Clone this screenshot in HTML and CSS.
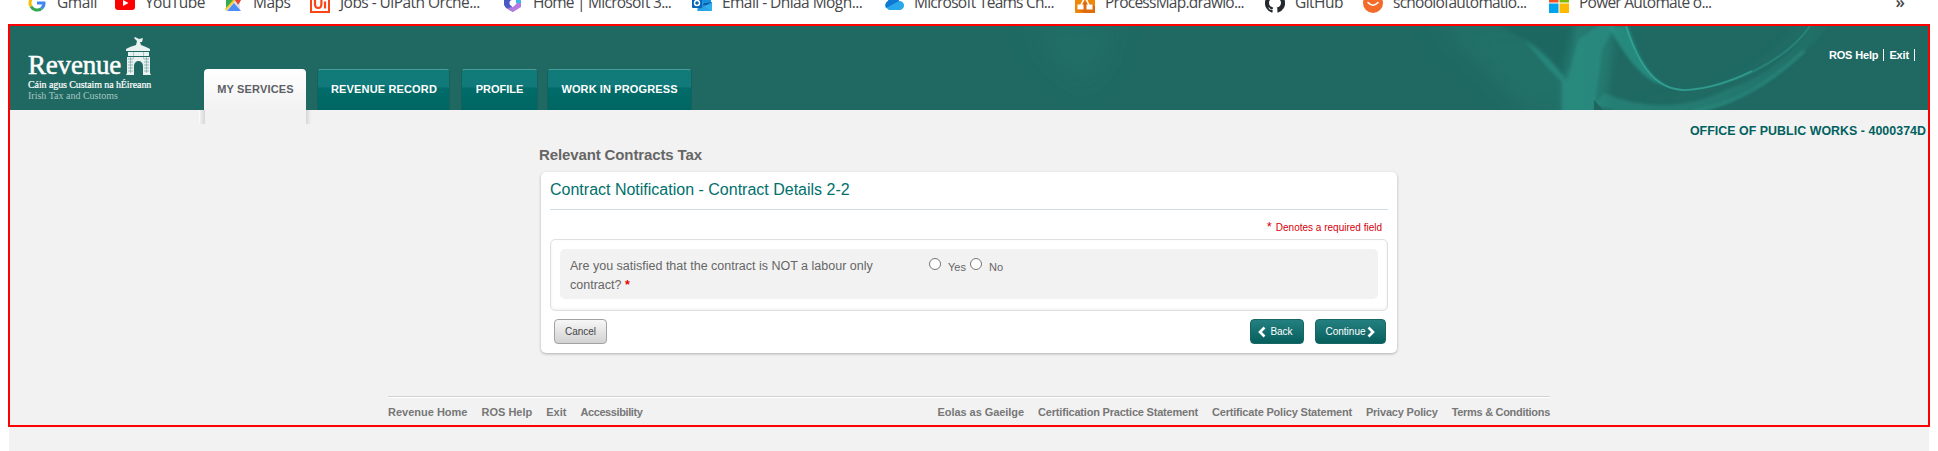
FILE: index.html
```html
<!DOCTYPE html>
<html lang="en">
<head>
<meta charset="utf-8">
<title>Revenue Online Service</title>
<link rel="stylesheet" href="styles.css">
</head>
<body>
<nav class="bookmarks">
  <a class="bm" style="width:88px"><svg viewBox="0 0 20 20"><g fill="none" stroke-width="3"><path d="M16 5A7 7 0 0 0 4 6.500" stroke="#ea4335"/><path d="M4 6.500A7 7 0 0 0 4 13.500" stroke="#fbbc05"/><path d="M4 13.500A7 7 0 0 0 14.500 15.500" stroke="#34a853"/><path d="M14.500 15.500A7 7 0 0 0 17 10H10" stroke="#4285f4"/></g></svg><span class="wide">Gmail</span></a>
  <a class="bm" style="width:108px"><svg viewBox="0 0 20 20"><rect y="3" width="20" height="14" rx="3" fill="#f00"/><path d="M8 7l5.500 3L8 13z" fill="#fff"/></svg><span>YouTube</span></a>
  <a class="bm" style="width:87px"><svg viewBox="0 0 20 20"><path d="M3 3h14v14H3z" fill="#34a853"/><path d="M2 17L13 6l4 4v7z" fill="#dfe3e8"/><path d="M4 18L11 10l7 8z" fill="#4c8df6"/><path d="M2 16L12 5l1.500 1.500L3 18z" fill="#fbcb2d"/><path d="M11 4a4 4 0 0 1 8 0c0 3-2 4-4 8-2-4-4-5-4-8z" fill="#ea4335"/></svg><span>Maps</span></a>
  <a class="bm" style="width:193px"><svg viewBox="0 0 20 20"><rect x="1" y="1" width="18" height="18" fill="#fff" stroke="#fa4616" stroke-width="2"/><path d="M5 5v6q0 4 3.200 4t3.200-4V5M15 8.500V15.500M15 5v2" fill="none" stroke="#fa4616" stroke-width="2.200"/></svg><span>Jobs - UiPath Orche...</span></a>
  <a class="bm" style="width:189px"><svg viewBox="0 0 20 20"><path d="M1 6l8-6v7l-2 3 2 4 1 5-7-4-2-3z" fill="#4659c5"/><path d="M9 0l9 5v7l-5-2V7z" fill="#39b9e8"/><path d="M18 10v4l-8 5-6-4 6-1 4-4z" fill="#b57adf"/><circle cx="9.500" cy="10" r="3" fill="#fff"/></svg><span class="tight">Home | Microsoft 3...</span></a>
  <a class="bm" style="width:192px"><svg viewBox="0 0 20 20"><path d="M6 0h13v18H6z" fill="#1490df"/><path d="M6 10l14 8V9z" fill="#28a8ea"/><path d="M5 18l15-9-8 1z" fill="#0a5ba8"/><path d="M5 12h15v6H5z" fill="#37b3ee" opacity=".6"/><rect x="0" y="5" width="10" height="10" rx="1" fill="#0364b8"/><circle cx="5" cy="10" r="2.500" fill="none" stroke="#fff" stroke-width="1.500"/></svg><span>Email - Dhiaa Mogh...</span></a>
  <a class="bm" style="width:191px"><svg viewBox="0 0 20 20"><path d="M5 17a5 5 0 0 1-1-9 6 6 0 0 1 11 0 4.500 4.500 0 0 1 1 9z" fill="#28a8ea"/><path d="M2 15a5 5 0 0 1 2-7 6 6 0 0 1 11 0z" fill="#0f78d4"/></svg><span class="tight">Microsoft Teams Ch...</span></a>
  <a class="bm" style="width:190px"><svg viewBox="0 0 20 20"><rect width="20" height="20" rx="1" fill="#f08705"/><path d="M10 20l-8-3 8-9 10 5v7z" fill="#df6c0c"/><path d="M10 4L5.500 13M10 4l4.500 9" stroke="#fff" stroke-width="1.600"/><path d="M7 2h6v5H7zM2.500 11.500h6v5h-6zM11.500 11.500h6v5h-6z" fill="#fff"/></svg><span class="tight">ProcessMap.drawio...</span></a>
  <a class="bm" style="width:98px"><svg viewBox="0 0 20 20"><path d="M10 0a10 10 0 0 0-3.200 19.500c.6.100.8-.3.800-.6v-2c-2.800.6-3.500-1.100-3.500-1.100-.5-1.200-1.100-1.500-1.100-1.500 1-.5 1.500.9 2 1.300.9 1.200 2.300.8 2.700.5.100-.7.400-1.100.7-1.400C5.500 14 4 12.500 4 9.700c0-1.100.3-2 1-2.700-.1-.5-.3-1.400.1-2.700 0 0 .9-.3 2.800 1h4.200c1.900-1.300 2.800-1 2.800-1 .4 1.300.2 2.200.1 2.700.7.700 1 1.600 1 2.700 0 2.800-1.500 4.300-4.300 4.700.5.500.7 1 .7 2v2.500c0 .3.200.7.800.6A10 10 0 0 0 10 0z" fill="#24292f"/></svg><span>GitHub</span></a>
  <a class="bm" style="width:186px"><svg viewBox="0 0 20 20"><circle cx="10" cy="10" r="10" fill="#f26b2b"/><path d="M5 9.500q5 5.500 10 0" fill="none" stroke="#fff" stroke-width="1.600" stroke-linecap="round"/></svg><span class="tight">schoolofautomatio...</span></a>
  <a class="bm"><svg viewBox="0 0 20 20"><path d="M0 0h9.500v9.500H0z" fill="#f25022"/><path d="M10.500 0H20v9.500h-9.500z" fill="#7fba00"/><path d="M0 10.500h9.500V20H0z" fill="#00a4ef"/><path d="M10.500 10.500H20V20h-9.500z" fill="#ffb900"/></svg><span class="tight">Power Automate o...</span></a>
  <span class="more">»</span>
</nav>

<main class="frame">
  <header class="masthead">
    <svg class="swirl" viewBox="1000 26 928 84">
      <defs>
        <filter id="soft" x="-20%" y="-20%" width="140%" height="140%"><feGaussianBlur stdDeviation="1.800"/></filter>
        <filter id="mist" x="-40%" y="-40%" width="180%" height="180%"><feGaussianBlur stdDeviation="4"/></filter>
        <filter id="haze" x="-60%" y="-60%" width="220%" height="220%"><feGaussianBlur stdDeviation="12"/></filter>
        <linearGradient id="ribbon" x1="0" y1="1" x2="1" y2="0"><stop offset="0" stop-color="#2c8f83"/><stop offset="1" stop-color="#227167"/></linearGradient>
      </defs>
      <path d="M1030 20h90l-10 40-25 30-40-30z" fill="#24776d" opacity=".4" filter="url(#haze)"/>
      <path d="M1430 20h150v95h-50z" fill="#268074" opacity=".35" filter="url(#haze)"/>
      <path d="M1490 20h84v50l-12 4q-20-30-40-36z" fill="#1f6860" filter="url(#soft)"/>
      <path d="M1576 20h40Q1612 60 1604 115h-42V80z" fill="#2a887c" opacity=".55" filter="url(#mist)"/>
      <path d="M1578 40l28-20h12l-16 30-8 62h-32V82l-14-14-23-27q24 15 42 40z" fill="#2c8f83" opacity=".7" filter="url(#soft)"/>
      <path d="M1630 100h60q60-12 110-60l20-20-20 0q-40 55-95 70-40 8-75 10z" fill="#227067" opacity=".6" filter="url(#mist)"/>
      <path d="M1595 104q15 6 25 8h75q30-5 56-22 48-26 77-64h-16q-34 48-85 63-30 16-65 16-30 0-58-12z" fill="url(#ribbon)" opacity=".6" filter="url(#soft)"/>
      <path d="M1594 100l10 11h-10z" fill="#1e665e"/>
      <path d="M1608 26h20c7 22 18 51 40 60-25-3-42-29-60-60z" fill="#2c9b8e" opacity=".65" filter="url(#soft)"/>
      <path d="M1626 26c13 40 30 65 61 64 42-3 97-27 123-64" fill="none" stroke="#2f9e90" stroke-width="2.200" opacity=".45"/>
      <path d="M1626 26c13 40 30 65 61 64 20-1 42-8 65-19" fill="none" stroke="#36a698" stroke-width="1.600" opacity=".7"/>
      <path d="M1694 111q55-8 110-60" fill="none" stroke="#2b8c80" stroke-width="3" opacity=".8" filter="url(#soft)"/>
    </svg>
    <div class="brand">
      <div class="brand-top">
        <span class="brand-name">Revenue</span>
        <svg class="gate" viewBox="0 0 26 40"><g fill="#e9f2f1"><path d="M11 9l1-4-3-3 1-1 4 2 4-1-1 4h-2l1 3 5 2 4 2v2H1v-2l4-2z"/><path d="M3 16h21v4H3z"/><path fill-rule="evenodd" d="M2 21h23v16l1 2h-8v-9a4.500 5 0 0 0-9 0v9H1l1-2z"/></g><g stroke="#1f6962" stroke-width=".7" opacity=".6"><path d="M3 23h5M3 26h5M3 29h5M3 32h5M3 35h5M19 23h5M19 26h5M19 29h5M19 32h5M19 35h5M3 15.500h21M3 20.500h21"/></g><g stroke="#1f6962" stroke-width=".6" opacity=".5"><path d="M8.500 16v7M18.500 16v7M5.500 21v16M21.500 21v16"/></g></svg>
      </div>
      <span class="brand-irish">Cáin agus Custaim na hÉireann</span>
      <span class="brand-english">Irish Tax and Customs</span>
    </div>
    <div class="tabs">
      <a class="tab active">MY SERVICES</a>
      <a class="tab record">REVENUE RECORD</a>
      <a class="tab profile">PROFILE</a>
      <a class="tab progress">WORK IN PROGRESS</a>
    </div>
    <div class="session"><a>ROS Help</a><a>Exit</a></div>
  </header>

  <div class="customer">OFFICE OF PUBLIC WORKS - 4000374D</div>

  <section class="content">
    <h1>Relevant Contracts Tax</h1>
    <div class="card">
      <h2>Contract Notification - Contract Details 2-2</h2>
      <p class="required"><b>*</b><span>Denotes a required field</span></p>
      <div class="fields">
        <div class="question">
          <div class="label">Are you satisfied that the contract is NOT a labour only<br>contract? <b>*</b></div>
          <div class="answers"><i class="radio"></i><span>Yes</span><i class="radio"></i><span>No</span></div>
        </div>
      </div>
      <div class="actions">
        <button class="btn cancel">Cancel</button>
        <button class="btn primary back"><svg viewBox="0 0 8 12"><path d="M6.500 1.500L2 6l4.500 4.500" /></svg>Back</button>
        <button class="btn primary next">Continue<svg viewBox="0 0 8 12"><path d="M1.500 1.500L6 6l-4.500 4.500" /></svg></button>
      </div>
    </div>
  </section>

  <footer class="footer">
    <div class="links"><a>Revenue Home</a><a>ROS Help</a><a>Exit</a><a class="access">Accessibility</a></div>
    <div class="links legal"><a class="eolas">Eolas as Gaeilge</a><a>Certification Practice Statement</a><a>Certificate Policy Statement</a><a>Privacy Policy</a><a class="terms">Terms &amp; Conditions</a></div>
  </footer>
</main>
<div class="tail"></div>
</body>
</html>
```
FILE: styles.css
```css
* { box-sizing: border-box; }
body {
  margin: 0;
  width: 1938px;
  height: 451px;
  overflow: hidden;
  background: #fff;
  font-family: "Liberation Sans", Arial, sans-serif;
  color: #666;
}

/* browser bookmarks strip */
.bookmarks {
  display: flex;
  height: 24px;
  padding-left: 27px;
  overflow: hidden;
  font: 15.5px/20px "Open Sans", "Noto Sans", sans-serif;
  color: #46474a;
}
.bm { display: flex; flex: none; gap: 10px; height: 20px; margin-top: -7px; white-space: nowrap; }
.bm svg { width: 20px; height: 20px; flex: none; }
.bm span { margin-top: -1px; letter-spacing: -0.55px; }
.bm .tight { letter-spacing: -0.75px; }
.bm .wide { letter-spacing: -0.4px; }
.more { margin: -8px 33px 0 auto; font-weight: 600; font-size: 17px; }

/* page frame */
.frame {
  display: flex;
  flex-direction: column;
  width: 1922px;
  height: 403px;
  margin-left: 8px;
  border: 2px solid #f00;
  background: #f2f2f2;
}
.tail { width: 1920px; height: 24px; margin-left: 9px; background: #f2f2f2; }

.masthead {
  display: flex;
  position: relative;
  flex: none;
  height: 84px;
  background: #1f6962;
}
.swirl { position: absolute; right: 0; top: 0; width: 928px; height: 84px; }

.brand { display: flex; flex: none; flex-direction: column; width: 194px; padding: 10px 0 0 18px; color: #fff; white-space: nowrap; }
.brand-top { display: flex; height: 43px; }
.brand-name { width: 97px; padding-top: 13px; font: 27px/32px "Liberation Serif", serif; letter-spacing: -0.2px; -webkit-text-stroke: 0.5px #fff; }
.gate { width: 26px; height: 40px; }
.brand-irish { font: 10px/11px "Liberation Serif", serif; letter-spacing: -0.1px; -webkit-text-stroke: 0.2px #fff; }
.brand-english { font: 10px/11px "Liberation Serif", serif; color: #a5c6c2; }

.tabs { display: flex; align-items: flex-start; padding-top: 43px; }
.tab {
  height: 41px;
  border-radius: 4px 4px 0 0;
  border: 1px solid #17605b;
  border-top-color: #4b9c99;
  border-bottom: 0;
  background: linear-gradient(#0f7b79 0, #12797a 17px, #006c69 18px, #006663 100%);
  color: #fff;
  font: bold 11px/39px "Liberation Sans", Arial, sans-serif;
  text-align: center;
  white-space: nowrap;
}
.active {
  position: relative;
  width: 102px;
  height: 55px;
  margin-right: 11px;
  padding-left: 1px;
  border: 0;
  background: linear-gradient(#fff, #f2f2f2 40px);
  color: #5d5f66;
  line-height: 41px;
  letter-spacing: 0.15px;
}
.active::before, .active::after { content: ""; position: absolute; top: 41px; width: 5px; height: 14px; }
.active::before { left: -5px; border-left: 1px solid #fafafa; background: linear-gradient(to left, #d6d6d6, #f0f0f0); }
.active::after { right: -5px; background: linear-gradient(to right, #d6d6d6, #f2f2f2); }
.record { width: 133px; margin-right: 11px; padding-left: 1px; letter-spacing: 0.15px; }
.profile { width: 77px; margin-right: 9px; }
.progress { width: 145px; letter-spacing: 0.12px; }

.session { display: flex; position: relative; margin: 23px 13px 0 auto; height: 12px; color: #fff; font: bold 11px/12px "Liberation Sans", Arial, sans-serif; letter-spacing: -0.15px; }
.session a { padding-right: 5px; margin-left: 5px; border-right: 1px solid #fff; }

.customer {
  height: 37px;
  padding-right: 2px;
  color: #00615f;
  font: bold 12.4px/42px "Liberation Sans", Arial, sans-serif;
  letter-spacing: 0.04px;
  text-align: right;
}

/* form */
.content { width: 858px; height: 222px; margin-left: 529px; }
h1 { height: 25px; margin: 0; font: bold 15px/15px "Liberation Sans", Arial, sans-serif; letter-spacing: -0.12px; color: #666; }
.card {
  width: 856px;
  height: 181px;
  margin-left: 2px;
  padding: 0 9px;
  border-radius: 5px;
  background: #fff;
  box-shadow: 0 1px 3px rgba(0,0,0,.28);
}
h2 { height: 38px; margin: 0; border-bottom: 1px solid #d3dde3; color: #00706d; font: 16px/36px "Liberation Sans", Arial, sans-serif; }
.required { display: flex; justify-content: flex-end; gap: 4px; height: 29px; margin: 0; padding-right: 6px; color: #d8000c; font: 10px/35px "Liberation Sans", Arial, sans-serif; }
.required b { font-size: 13px; font-weight: normal; line-height: 33px; }
.fields { height: 72px; padding: 9px; border: 1px solid #e0e0e0; border-radius: 5px; box-shadow: inset 0 -1px 3px #eee; }
.question { display: flex; height: 50px; padding: 8px 10px; border-radius: 5px; background: #f2f2f2; }
.label { width: 359px; font: 12.5px/19px "Liberation Sans", Arial, sans-serif; white-space: nowrap; }
.label b { color: #e00; }
.answers { display: flex; height: 20px; font: 11px/21px "Liberation Sans", Arial, sans-serif; }
.radio { width: 12px; height: 12px; margin-top: 1px; border: 1px solid #767676; border-radius: 50%; background: #fff; }
.answers span { margin: 0 4px 0 7px; }

.actions { display: flex; padding: 8px 2px 0 4px; }
.btn { display: flex; align-items: center; justify-content: center; height: 25px; padding: 0; border-radius: 4px; font: 10px/12px "Liberation Sans", Arial, sans-serif; white-space: nowrap; }
.cancel { width: 53px; border: 1px solid #a2a2a2; background: linear-gradient(#f7f7f7, #d2d2d2); color: #444; }
.primary { gap: 4px; border: 1px solid #166664; background: linear-gradient(#248080, #075f5d); color: #fff; }
.primary svg { width: 8px; height: 12px; fill: none; stroke: #fff; stroke-width: 2.600; }
.back { width: 54px; margin-left: auto; padding-right: 3px; }
.next { width: 71px; margin-left: 11px; padding-right: 1px; gap: 1px; }

.footer {
  display: flex;
  justify-content: space-between;
  width: 1162px;
  margin: 27px 0 0 378px;
  border-top: 1px solid #d2d2d2;
  box-shadow: inset 0 1px #fff;
  color: #777;
  font: bold 11px/13px "Liberation Sans", Arial, sans-serif;
}
.links { display: flex; gap: 14px; padding-top: 9px; white-space: nowrap; }
.access { letter-spacing: -0.4px; }
.legal { letter-spacing: -0.2px; }
.eolas { letter-spacing: -0.05px; }
.terms { letter-spacing: -0.3px; }
```
